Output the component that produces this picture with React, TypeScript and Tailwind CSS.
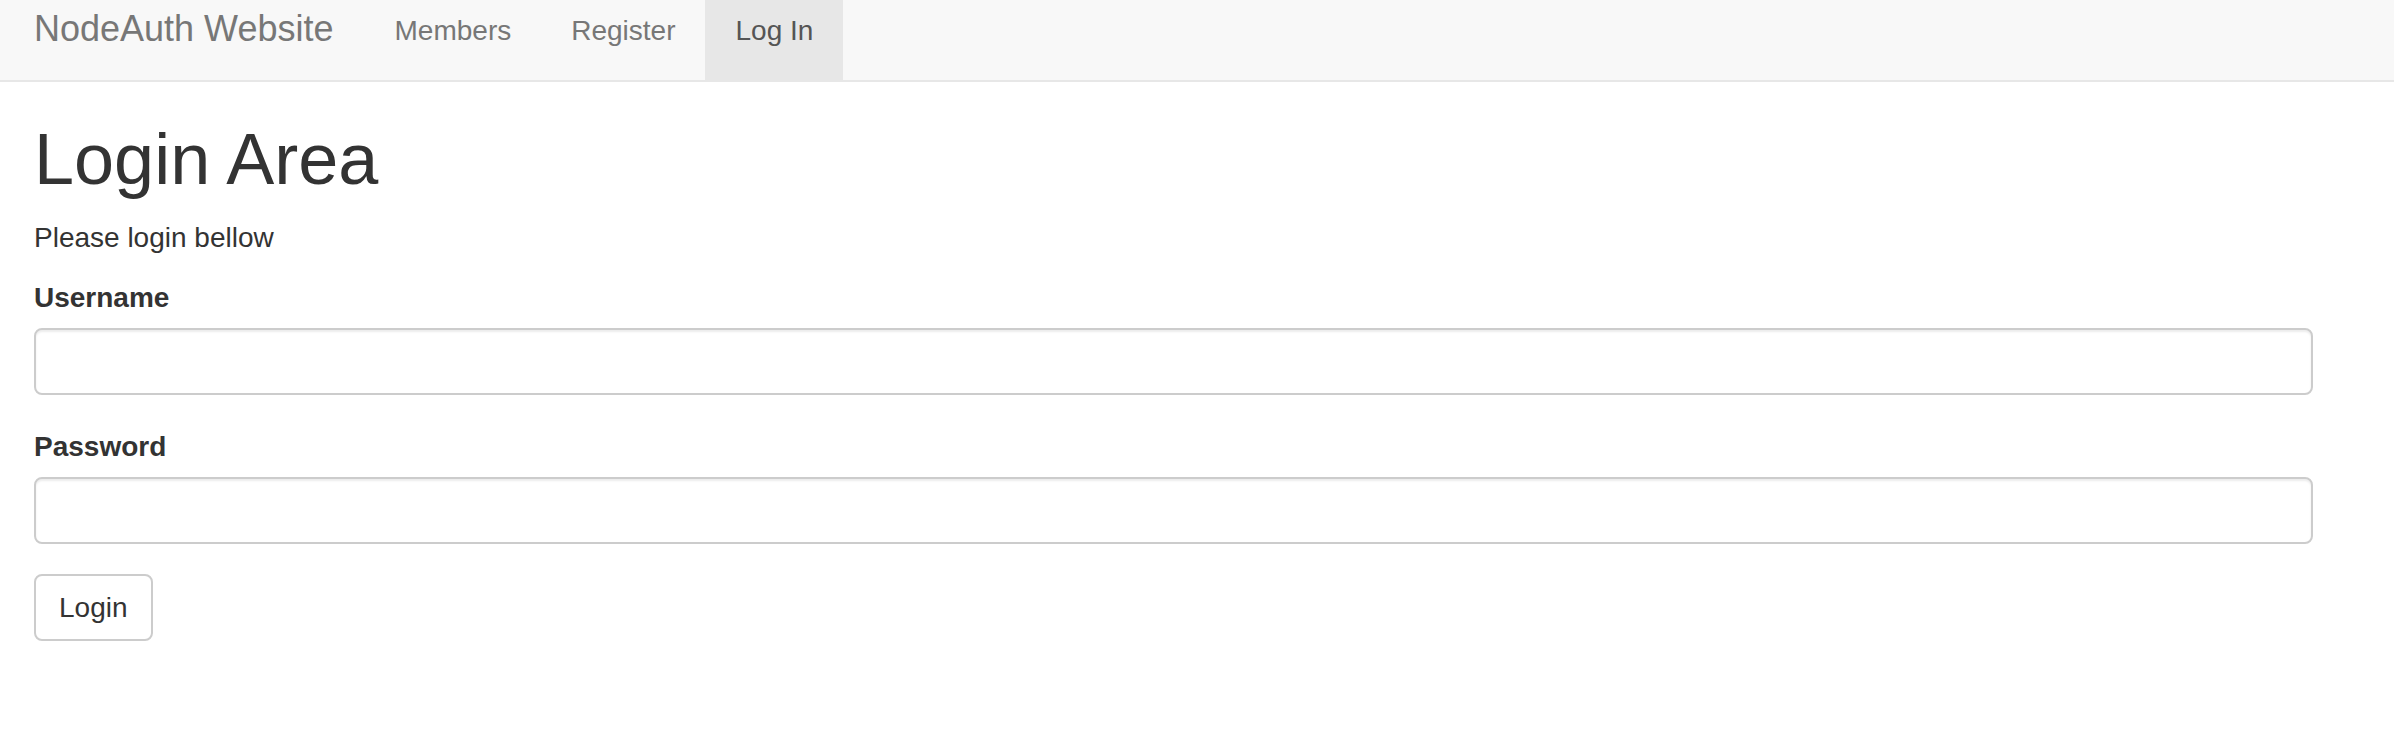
const navLinks = [
  { label: "Members", active: false },
  { label: "Register", active: false },
  { label: "Log In", active: true },
];

function Field({ label, type, gap }: { label: string; type: string; gap: string }) {
  return (
    <div className={gap}>
      <label className="block mb-[10px] text-[28px] leading-[40px] font-bold">{label}</label>
      <input
        type={type}
        className="block w-full h-[67px] px-[24px] rounded-[8px] border-2 border-[#ccc] bg-white text-[28px] shadow-[inset_0_2px_2px_rgba(0,0,0,0.075)] outline-none"
      />
    </div>
  );
}

export default function App() {
  return (
    <div className="min-h-screen bg-white text-[#333] font-['Liberation_Sans',Arial,sans-serif]">
      {/* Navbar */}
      <nav className="flex h-[82px] border-b-2 border-[#e7e7e7] bg-[#f8f8f8]">
        <a href="#" className="pl-[34px] pr-[31px] pt-[9px] text-[36px] leading-[40px] text-[#777]">
          NodeAuth Website
        </a>
        <ul className="flex">
          {navLinks.map((l) => (
            <li key={l.label}>
              <a
                href="#"
                className={`block h-[80px] px-[30px] pt-[11px] text-[28px] leading-[40px] ${
                  l.active ? "bg-[#e7e7e7] text-[#555]" : "text-[#777]"
                }`}
              >
                {l.label}
              </a>
            </li>
          ))}
        </ul>
      </nav>

      {/* Content */}
      <div className="pl-[34px] pr-[81px]">
        <h1 className="mt-[38px] mb-[19px] text-[72px] leading-[79px] font-normal">Login Area</h1>
        <p className="mb-[20px] text-[28px] leading-[40px]">Please login bellow</p>
        <form>
          <Field label="Username" type="text" gap="mb-[32px]" />
          <Field label="Password" type="password" gap="mb-[30px]" />
          <button
            type="submit"
            className="h-[67px] px-[23px] rounded-[8px] border-2 border-[#ccc] bg-white text-[28px] leading-[40px] text-[#333]"
          >
            Login
          </button>
        </form>
      </div>
    </div>
  );
}
